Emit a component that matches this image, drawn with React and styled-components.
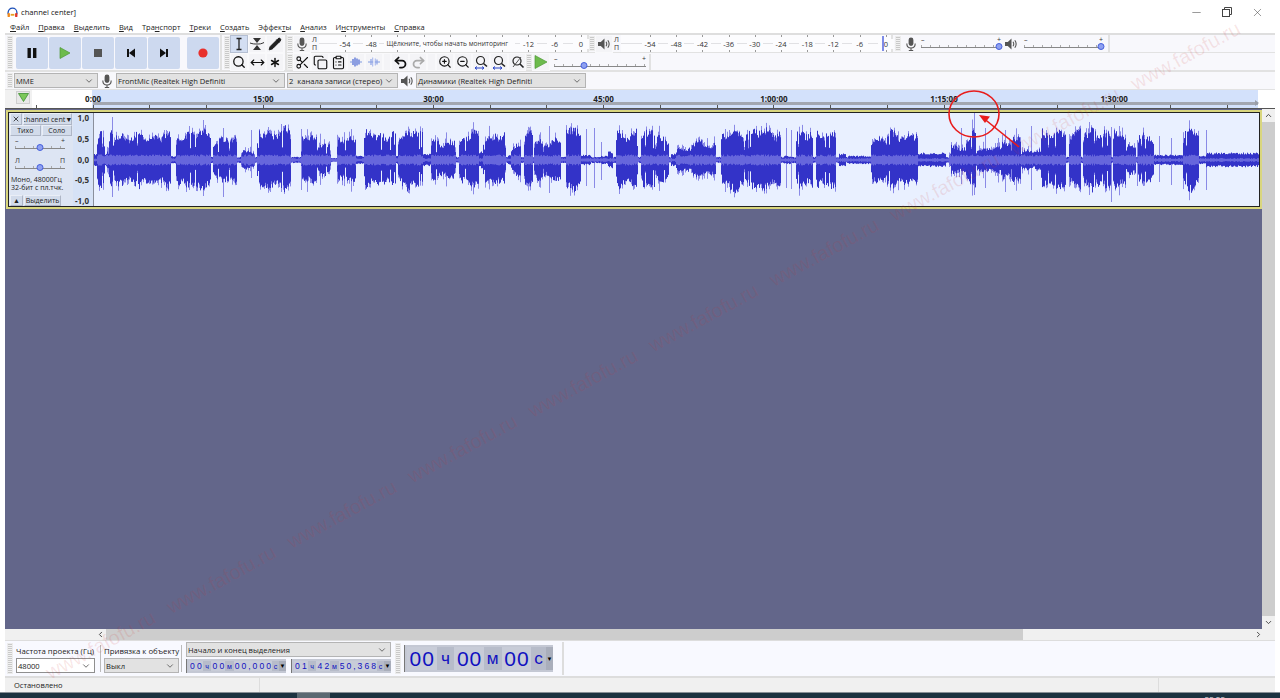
import React from "react";
import styled, { createGlobalStyle } from "styled-components";
import {
  Minus, X, ChevronDown, ChevronUp, ChevronLeft, ChevronRight, Pencil, Search, ZoomIn, ZoomOut,
  Scissors, Copy, ClipboardList, Undo2, Redo2, MoveHorizontal, Asterisk,
} from "lucide-react";

const GlobalStyle = createGlobalStyle`
  html, body { margin: 0; padding: 0; background: #fff; overflow: hidden; }
  * { box-sizing: border-box; }
  body { font-family: "Open Sans", "Liberation Sans", sans-serif; font-size: 8px; color: #222; }
`;

// envelope of the recording, read off the picture: [from x, to x, amplitude]
const SEGMENTS = [
  [93, 96, 6], [96, 104, 28], [104, 108, 10], [108, 113, 33], [113, 170, 27], [170, 175, 4], [175, 210, 30],
  [210, 212, 3], [212, 236, 23], [236, 240, 3], [240, 254, 9], [256, 290, 31], [290, 298, 3], [300, 316, 25],
  [316, 330, 16], [330, 336, 2], [336, 355, 22], [355, 363, 4], [363, 395, 28], [395, 397, 4], [397, 422, 30],
  [422, 430, 6], [430, 455, 20], [458, 478, 27], [478, 482, 8], [482, 505, 28], [507, 510, 5], [510, 520, 16],
  [523, 532, 31], [533, 560, 21], [560, 565, 3], [563, 580, 33], [580, 590, 5], [600, 607, 4], [607, 612, 8],
  [615, 637, 30], [640, 655, 31], [655, 668, 23], [670, 675, 6], [675, 690, 12], [690, 715, 18], [720, 780, 31],
  [783, 790, 4], [795, 812, 31], [815, 835, 31], [838, 845, 6], [847, 870, 4], [870, 885, 24], [885, 917, 28],
  [917, 945, 7], [948, 965, 15], [965, 975, 31], [975, 1000, 13], [1000, 1020, 23], [1020, 1040, 11],
  [1040, 1065, 31], [1068, 1080, 31], [1082, 1095, 34], [1095, 1110, 29], [1112, 1125, 31], [1125, 1135, 15],
  [1137, 1153, 27], [1153, 1162, 5], [1162, 1182, 5], [1182, 1198, 31], [1198, 1205, 4], [1205, 1258, 7],
];

// single tall columns: [x, up, down]
const SPIKES = [
  [111, 43, 37], [202, 40, 36], [222, 32, 37], [188, 34, 30], [250, 30, 18], [280, 36, 32], [300, 31, 30],
  [548, 34, 33], [585, 31, 26], [593, 32, 28], [600, 18, 20], [621, 30, 25], [785, 32, 28], [790, 30, 29],
  [973, 47, 35], [960, 32, 24], [984, 32, 28], [1004, 30, 32], [1030, 34, 30], [1110, 33, 42], [1158, 24, 22],
  [1170, 22, 25], [1205, 30, 30], [1136, 20, 26], [1088, 38, 35],
];

const buildWave = () => {
  let seed = 17;
  const rnd = () => {
    seed = (seed * 1103515245 + 12345) % 2147483648;
    return seed / 2147483648;
  };
  const top = 47;
  let dark = "";
  let fringe = "";
  let rms = "";
  for (let x = 93; x < 1258; x++) {
    const seg = SEGMENTS.find((s) => x >= s[0] && x < s[1]);
    const col = x - 93 + 0.5;
    let base = seg ? seg[2] : 3;
    if (seg && base > 8) {
      // syllables: slight swell inside a phrase, tapering only at the very ends
      const swell = 0.9 + 0.16 * Math.sin(x * 0.31 + seg[0]) * Math.sin(x * 0.083);
      const edge = Math.min(1, 0.7 + Math.min(x - seg[0], seg[1] - x) / 4);
      base = base * swell * edge;
    }
    const notch = seg && seg[2] > 12 && rnd() < 0.06 ? 0.5 : 1;
    const up = base * (0.78 + rnd() * 0.3) * notch;
    const down = base * (0.74 + rnd() * 0.3) * notch;
    dark += `M${col} ${(top - up).toFixed(1)}V${(top + down).toFixed(1)}`;
    if (seg && seg[2] > 8 && rnd() > 0.4) {
      const extra = rnd() * (rnd() < 0.12 ? 12 : 5);
      fringe += `M${col} ${(top - up - extra).toFixed(1)}V${(top + down + extra).toFixed(1)}`;
    }
    const band = seg && seg[2] > 8 ? 3.5 + rnd() * 2 : 1 + rnd();
    rms += `M${col} ${(top - band).toFixed(1)}V${(top + band).toFixed(1)}`;
  }
  SPIKES.forEach(([x, up, down]) => {
    fringe += `M${x - 93 + 0.5} ${top - up}V${top + down}`;
  });
  return { dark, fringe, rms };
};

const WAVE = buildWave();

const Window = styled.div`
  position: relative;
  width: 1280px;
  height: 698px;
  display: flex;
  flex-direction: column;
  overflow: hidden;
  background: #fff;
`;

const TitleBar = styled.div`
  height: 20px;
  display: flex;
  align-items: center;
  padding: 4px 7px 0;
  gap: 3px;
  font-size: 7.6px;
  color: #111;
`;

const WindowControls = styled.div`
  margin-left: auto;
  margin-right: 9px;
  display: flex;
  align-items: center;
  gap: 19px;
  color: #444;
  svg { display: block; }
`;

const MenuBar = styled.div`
  height: 13px;
  display: flex;
  align-items: center;
  gap: 9px;
  padding-left: 10px;
  font-size: 7.5px;
  color: #222;
  u { text-decoration-thickness: 0.5px; text-underline-offset: 1px; }
`;

const Body = styled.div`
  flex: 1;
  display: flex;
  flex-direction: column;
  padding: 0 5px;
  min-height: 0;
`;

const Dock = styled.div`
  background: #f8f8fc;
  border-top: 2px solid #dedede;
`;

const DockRow = styled.div`
  height: 37px;
  display: flex;
  border-bottom: 2px solid #e2e2e2;
`;

const DeviceRow = styled.div`
  height: 18px;
  display: flex;
  align-items: center;
  padding-left: 2px;
  border-bottom: 1px solid #e2e2e2;
`;

const Grip = styled.div`
  flex: none;
  width: 6px;
  align-self: stretch;
  margin: 1px ${(p) => p.$mr ?? 3}px 1px ${(p) => p.$ml || 0}px;
  background: repeating-linear-gradient(to bottom, #c9c9c9 0 1px, #f1f1f1 1px 2px);
  border: 1px solid #ececec;
`;

const TransportBar = styled.div`
  flex: none;
  width: 217px;
  display: flex;
  align-items: center;
  gap: 1px;
  padding-left: 2px;
  border-right: 2px solid #e2e2e2;
`;

const TransportButton = styled.div`
  width: 32px;
  height: 32px;
  display: flex;
  align-items: center;
  justify-content: center;
  background: #cdd9ef;
  border-radius: 2px;
  margin-left: ${(p) => (p.$gap ? "6px" : "0")};
`;

const ToolsBar = styled.div`
  flex: none;
  width: 65px;
  display: flex;
  align-items: stretch;
  padding-left: 2px;
  border-right: 2px solid #e2e2e2;
`;

const ToolGrid = styled.div`
  display: grid;
  grid-template-columns: repeat(3, 18px);
  grid-auto-rows: 18px;
`;

const IconButton = styled.div`
  flex: none;
  width: ${(p) => p.$w || 18}px;
  height: 18px;
  display: flex;
  align-items: center;
  justify-content: center;
  background: ${(p) => (p.$active ? "#d3def2" : "#f4f4f7")};
  border: 1px solid ${(p) => (p.$active ? "#b5bfd2" : "#f9f9fb")};
  color: #111;
`;

const RightColumn = styled.div`
  flex: 1;
  display: flex;
  flex-direction: column;
  min-width: 0;
`;

const SubRow = styled.div`
  height: 18px;
  display: flex;
  align-items: center;
  border-bottom: ${(p) => (p.$line ? "1px solid #e2e2e2" : "none")};
`;

const MeterLabels = styled.div`
  flex: none;
  width: 8px;
  font-size: 7px;
  line-height: 8px;
  color: #333;
  padding-left: 1px;
`;

const Meter = styled.div`
  flex: none;
  width: ${(p) => p.$w}px;
  height: 17px;
  display: flex;
  align-items: center;
  padding-left: ${(p) => p.$pad}px;
  font-size: 7.5px;
  color: #333;
  white-space: nowrap;
  background:
    repeating-linear-gradient(to right, #999 0 1px, transparent 1px 26.2px) ${(p) => p.$pad + 13}px 0 / 100% 2px no-repeat,
    repeating-linear-gradient(to right, #999 0 1px, transparent 1px 26.2px) ${(p) => p.$pad + 13}px 100% / 100% 2px no-repeat,
    linear-gradient(#e1e1e4, #e1e1e4) 0 50% / 100% 1px no-repeat,
    #fcfcfe;
  border-right: 2px solid #e2e2e2;
`;

const MeterMark = styled.span`
  flex: none;
  width: 26.2px;
  text-align: center;
  background: #fcfcfe;
  background-clip: content-box;
  padding: 0 5px;
`;

const MeterHint = styled.span`
  flex: none;
  width: 131px;
  text-align: left;
  padding-left: 2px;
  font-size: 6.6px;
  background: #fcfcfe;
`;

const PeakMark = styled.span`
  flex: none;
  width: 2px;
  height: 15px;
  background: #7e8ce8;
  margin-left: -17px;
`;

const MixerBar = styled.div`
  display: flex;
  align-items: center;
  gap: 3px;
  width: ${(p) => p.$w || 217}px;
  height: 17px;
  padding-left: ${(p) => p.$pad || 2}px;
  border-right: 2px solid #e2e2e2;
`;

const SliderBox = styled.div`
  position: relative;
  flex: none;
  width: ${(p) => p.$w}px;
  height: 15px;
  margin-left: ${(p) => p.$ml || 0}px;
  font-size: 7px;
  color: #333;
  display: flex;
  justify-content: space-between;
  line-height: 7px;
`;

const SliderTrack = styled.div`
  position: absolute;
  left: 0;
  right: 0;
  bottom: 3px;
  height: 3px;
  border-bottom: 1px solid #888;
  background: repeating-linear-gradient(to right, #aaa 0 1px, transparent 1px 9px);
`;

const SliderThumb = styled.div`
  position: absolute;
  bottom: 1px;
  width: 7px;
  height: 7px;
  border-radius: 50%;
  background: #8ea0f0;
  border: 1.5px solid #4660dc;
  transform: translateX(-50%);
`;

const SelectBox = styled.div`
  flex: none;
  width: ${(p) => p.$w}px;
  height: ${(p) => p.$h || 15}px;
  margin-right: ${(p) => p.$mr || 0}px;
  display: flex;
  align-items: center;
  justify-content: space-between;
  padding: 0 3px 0 1px;
  background: ${(p) => (p.$white ? "#fff" : "#e2e2e2")};
  border: 1px solid ${(p) => (p.$white ? "#8f8f8f" : "#b4b4b4")};
  font-size: 7.6px;
  color: #222;
  white-space: nowrap;
  svg { color: #555; flex: none; }
`;

const DeviceIcon = styled.div`
  flex: none;
  width: ${(p) => p.$w}px;
  display: flex;
  justify-content: center;
  color: #444;
`;

const Ruler = styled.div`
  height: 19px;
  display: flex;
  flex-direction: column;
  background: linear-gradient(to right, #f1f1f1 27px, #fff 27px 87px, #d3e1fb 87px 1253px, #fff 1253px);
  border-bottom: 1px solid #555;
`;

const RulerLabels = styled.div`
  position: relative;
  height: 13px;
  margin-bottom: -1px;
  padding-left: 3px;
  display: flex;
  align-items: flex-end;
  font-size: 8px;
  line-height: 9px;
  font-weight: 700;
  color: #222;
`;

const RulerMark = styled.span`
  flex: none;
  width: 170.2px;
  text-align: center;
`;

const PlayheadButton = styled.div`
  position: absolute;
  left: 11px;
  top: 1px;
  width: 14px;
  height: 13px;
  background: #e8e8e8;
  border: 1px solid #cfcfcf;
  display: flex;
  align-items: center;
  justify-content: center;
`;

const ScrubBar = styled.div`
  position: relative;
  height: 3px;
  margin-left: 88px;
  width: 1165px;
  background: #a3a7b1;
  &::after {
    content: "";
    position: absolute;
    right: -1px;
    top: -2px;
    border-left: 4px solid #9a9ea8;
    border-top: 3.5px solid transparent;
    border-bottom: 3.5px solid transparent;
  }
`;

const RulerTicks = styled.div`
  height: 3px;
  background: repeating-linear-gradient(to right, #555 0 1px, transparent 1px 56.72px) 31px 0 no-repeat;
`;

const Workspace = styled.div`
  flex: 1;
  display: flex;
  min-height: 0;
`;

const Canvas = styled.div`
  flex: 1;
  background: #63668a;
  padding: 1px 0 0 1px;
`;

const Track = styled.div`
  height: 99px;
  display: flex;
  border: 2px solid #d9d67e;
  padding: 1px;
  background: #222;
`;

const TrackPanel = styled.div`
  flex: none;
  width: 64px;
  display: flex;
  flex-direction: column;
  background: #dde5f3;
  font-size: 7px;
  color: #222;
`;

const PanelRow = styled.div`
  height: 12px;
  display: flex;
  gap: 1px;
  padding: 0 1px;
`;

const PanelButton = styled.div`
  flex: ${(p) => (p.$w ? "none" : 1)};
  width: ${(p) => p.$w || 0}px;
  display: flex;
  align-items: center;
  justify-content: center;
  background: #d2dbea;
  border: 1px solid #eaeef6;
  border-right-color: #aeb6c6;
  border-bottom-color: #aeb6c6;
  white-space: nowrap;
  overflow: hidden;
  font-size: ${(p) => p.$fs || 7}px;
`;

const PanelInfo = styled.div`
  margin-top: auto;
  padding: 0 2px 3px;
  line-height: 8px;
  font-size: 7px;
`;

const PanelSlider = styled.div`
  padding: 1px 4px 0 6px;
  margin-bottom: 4px;
`;

const AmpRuler = styled.div`
  flex: none;
  width: 21px;
  display: flex;
  flex-direction: column;
  justify-content: space-between;
  align-items: flex-end;
  padding: 0 4px 1px 0;
  background: #d6e2f6;
  border-right: 1px solid #8a8f9c;
  font-size: 8px;
  line-height: 9px;
  font-weight: 700;
  color: #333;
`;

const WaveArea = styled.div`
  flex: 1;
  background: #e9f0ff;
  overflow: hidden;
`;

const VScroll = styled.div`
  flex: none;
  width: 13px;
  display: flex;
  flex-direction: column;
  align-items: center;
  background: #f0f0f0;
  color: #444;
  svg { flex: none; margin: 2px 0; }
`;

const VThumb = styled.div`
  flex: 1;
  width: 100%;
  background: #cdcdcd;
`;

const HScroll = styled.div`
  height: 11px;
  display: flex;
  align-items: center;
  background: #f0f0f0;
  color: #444;
  padding-left: 91px;
  padding-right: 12px;
`;

const HThumb = styled.div`
  width: 917px;
  height: 100%;
  margin: 0 auto 0 1px;
  background: #cdcdcd;
`;

const SelectionBar = styled.div`
  height: 38px;
  display: flex;
  padding: 1px 0 1px 2px;
  background: #f8f9ff;
  border-top: 1px solid #ddd;
  border-bottom: 2px solid #ddd;
`;

const BarColumn = styled.div`
  flex: none;
  width: ${(p) => p.$w}px;
  display: flex;
  flex-direction: column;
  justify-content: space-between;
  padding-bottom: 2px;
  font-size: 7.8px;
  color: #222;
  white-space: nowrap;
`;

const BarLabel = styled.div`
  height: 15px;
  line-height: 18px;
`;

const Divider = styled.div`
  flex: none;
  width: 1px;
  margin: 3px ${(p) => p.$r}px 3px ${(p) => p.$l}px;
  background: #bbb;
`;

const TimeRow = styled.div`
  display: flex;
  justify-content: space-between;
`;

const TimeBox = styled.div`
  flex: none;
  display: flex;
  align-items: stretch;
  width: ${(p) => (p.$big ? 149 : 100)}px;
  height: ${(p) => (p.$big ? 27 : 14)}px;
  padding: 2px 0 2px 2px;
  background: #c4c8d4;
  border-left: 1px solid #777;
  font-family: "Liberation Sans", sans-serif;
  font-size: ${(p) => (p.$big ? 21 : 8.6)}px;
  color: #1111c0;
`;

const TimeCell = styled.span`
  flex: ${(p) => p.$grow || 1};
  display: flex;
  align-items: center;
  justify-content: ${(p) => (p.$big ? "center" : "space-around")};
  gap: ${(p) => (p.$big ? 1 : 0)}px;
  background: ${(p) => (p.$unit ? "#b7bccA" : "#c8ccd8")};
  font-size: ${(p) => (p.$unit ? "0.82em" : "1em")};
`;

const TimeArrow = styled.span`
  flex: none;
  width: 7px;
  display: flex;
  align-items: center;
  justify-content: center;
  font-size: 6px;
  color: #000;
  background: #a9aebb;
`;

const BigTime = styled.div`
  display: flex;
  align-items: center;
  padding-left: 0;
  width: 160px;
  border-right: 2px solid #ddd;
`;

const StatusBar = styled.div`
  height: 14px;
  display: flex;
  align-items: center;
  background: #f0f0f0;
  font-size: 7.5px;
  color: #222;
`;

const StatusCell = styled.div`
  width: ${(p) => p.$w}px;
  height: 100%;
  padding-left: ${(p) => p.$pad || 0}px;
  line-height: 15px;
  border-right: 1px solid #ddd;
`;

const Taskbar = styled.div`
  height: 6px;
  display: flex;
  background: #1c3240;
  overflow: hidden;
  border-top: 1px solid #888f96;
`;

const TaskItem = styled.div`
  width: 33px;
  margin-left: 297px;
  background: #5a6871;
`;

const Clock = styled.div`
  margin-left: auto;
  margin-right: 55px;
  padding-top: 1px;
  font-size: 8px;
  line-height: 9px;
  color: #d8dde0;
`;

const Watermark = styled.div`
  position: absolute;
  left: 42px;
  top: 664px;
  display: flex;
  gap: 16px;
  font-family: "Liberation Sans", sans-serif;
  font-size: 20px;
  white-space: nowrap;
  color: rgba(205, 50, 50, 0.12);
  transform: rotate(-28.5deg);
  transform-origin: 0 0;
  pointer-events: none;
`;

const Annotation = styled.svg`
  position: absolute;
  left: 940px;
  top: 85px;
  pointer-events: none;
`;

const Mic = ({ size = 14 }) => (
  <svg width={size} height={size} viewBox="0 0 14 14" fill="none">
    <rect x="4.6" y="0.5" width="4.8" height="8.5" rx="2.4" fill="#555" />
    <path d="M2.8 6.5c0 3 1.8 4.5 4.2 4.5s4.2-1.5 4.2-4.5M7 11v2.5M4.8 13.5h4.4" stroke="#555" strokeWidth="1.1" />
  </svg>
);

const Speaker = ({ size = 14 }) => (
  <svg width={size} height={size} viewBox="0 0 14 14" fill="none">
    <path d="M1 5h2.8L7.5 1.6v10.8L3.8 9H1z" fill="#555" />
    <path d="M9 4.8c.9 1.3.9 3.1 0 4.4M10.8 3.3c1.6 2.2 1.6 5.2 0 7.4" stroke="#555" strokeWidth="1.1" />
  </svg>
);

const Logo = () => (
  <svg width="11" height="11" viewBox="0 0 12 12" fill="none">
    <path d="M1.2 8V6a4.8 4.8 0 0 1 9.6 0v2" stroke="#1b4fb8" strokeWidth="1.4" />
    <rect x="0.6" y="6.5" width="2.6" height="4.5" rx="1" fill="#f08a1c" />
    <rect x="8.8" y="6.5" width="2.6" height="4.5" rx="1" fill="#e0352b" />
    <path d="M4 8.5h4" stroke="#e8a020" strokeWidth="2" />
  </svg>
);

const RestoreIcon = () => (
  <svg width="10" height="10" viewBox="0 0 10 10" fill="none" stroke="#444">
    <rect x="0.5" y="2.5" width="7" height="7" />
    <path d="M2.5 2.5v-2h7v7h-2" />
  </svg>
);

const Shape = ({ w = 12, h = 12, children }) => (
  <svg width={w} height={h} viewBox={`0 0 ${w} ${h}`}>{children}</svg>
);

const Pause = () => <Shape><rect x="1.5" y="1" width="3.4" height="10" fill="#111" /><rect x="7" y="1" width="3.4" height="10" fill="#111" /></Shape>;
const Play = ({ size = 12 }) => <Shape w={size} h={size}><path d={`M1 0.5L${size - 1} ${size / 2}L1 ${size - 0.5}Z`} fill="#6dbb4c" stroke="#4f9a36" strokeWidth="0.7" /></Shape>;
const Stop = () => <Shape><rect x="2" y="2" width="8" height="8" fill="#555" /></Shape>;
const Prev = () => <Shape><rect x="2" y="2" width="2" height="8" fill="#111" /><path d="M10 1.5V10.5L4 6Z" fill="#111" /></Shape>;
const Next = () => <Shape><rect x="8" y="2" width="2" height="8" fill="#111" /><path d="M2 1.5V10.5L8 6Z" fill="#111" /></Shape>;
const Record = () => <Shape><circle cx="6" cy="6" r="4.6" fill="#e8302c" /></Shape>;

const IBeam = () => (
  <Shape w={14} h={14}><path d="M4.5 1.5h5M7 1.5v11M4.5 12.5h5" stroke="#222" strokeWidth="1.3" fill="none" /></Shape>
);

const EnvelopeTool = () => (
  <Shape w={16} h={14}>
    <path d="M4 1h8L8 6Z M4 13h8L8 8Z" fill="#333" />
    <path d="M1 6c3 1 4 1 7 1s4 0 7-1.5" stroke="#333" fill="none" />
  </Shape>
);

const Bars = ({ split }) => (
  <Shape w={14} h={12}>
    <path d={split ? "M1 6h12" : "M1 6h2M11 6h2"} stroke="#7f9ae0" strokeWidth="1" />
    <path d="M4 3v6M6 1.5v9M8 2.5v7M10 3.5v5" stroke={split ? "#8aa0e6" : "#4664d2"} strokeWidth="1.2" />
    {split && <path d="M7 0v12" stroke="#f8f8fc" strokeWidth="1.4" />}
  </Shape>
);

const FitZoom = ({ arrows }) => (
  <Shape w={15} h={15}>
    <circle cx="6.5" cy="5.5" r="4" fill="none" stroke="#222" strokeWidth="1.2" />
    <path d="M9.5 8.5l3.5 3" stroke="#222" strokeWidth="1.6" />
    {arrows && <path d="M1 13h9M1 13l2-1.5M1 13l2 1.5M10 13l-2-1.5M10 13l-2 1.5" stroke="#2b46c8" fill="none" />}
  </Shape>
);

const ZoomToggle = () => (
  <Shape w={15} h={15}>
    <circle cx="7" cy="6" r="4" fill="none" stroke="#222" strokeWidth="1.2" />
    <path d="M10 9l3.5 3.5" stroke="#222" strokeWidth="1.6" />
    <path d="M3 12l8-10" stroke="#555" />
  </Shape>
);

const Slider = ({ w, value, ml, left = "–", right = "+" }) => (
  <SliderBox $w={w} $ml={ml}>
    <span>{left}</span>
    <span>{right}</span>
    <SliderTrack />
    <SliderThumb style={{ left: `${value}%` }} />
  </SliderBox>
);

const Time = ({ big, groups }) => (
  <TimeBox $big={big}>
    {groups.map((g, i) => (
      <TimeCell key={i} $big={big} $unit={g.unit} $grow={g.grow}>
        {g.text.split("").map((c, j) => <span key={j}>{c}</span>)}
      </TimeCell>
    ))}
    <TimeArrow>▼</TimeArrow>
  </TimeBox>
);

const timeGroups = (h, m, s, ms) => {
  const out = [
    { text: h, grow: 2 }, { text: "ч", unit: true, grow: 1.2 },
    { text: m, grow: 2 }, { text: "м", unit: true, grow: 1.2 },
  ];
  if (ms) {
    out.push({ text: `${s},${ms}`, grow: 5.5 });
  } else {
    out.push({ text: s, grow: 2 });
  }
  out.push({ text: "с", unit: true, grow: 1 });
  return out;
};

const MENU = [
  ["", "Ф", "айл"], ["", "П", "равка"], ["", "В", "ыделить"], ["", "В", "ид"], ["Тра", "н", "спорт"], ["", "Т", "реки"],
  ["", "С", "оздать"], ["Эффек", "т", "ы"], ["", "А", "нализ"], ["И", "н", "струменты"], ["", "С", "правка"],
];

const RULER_MARKS = ["0:00", "15:00", "30:00", "45:00", "1:00:00", "1:15:00", "1:30:00"];
const PLAY_MARKS = ["-54", "-48", "-42", "-36", "-30", "-24", "-18", "-12", "-6", "0"];

const App = () => {
  return (
    <Window>
      <GlobalStyle />
      <TitleBar>
        <Logo />
        <span>channel center]</span>
        <WindowControls>
          <Minus size={13} strokeWidth={1} />
          <RestoreIcon />
          <X size={13} strokeWidth={1} />
        </WindowControls>
      </TitleBar>
      <MenuBar>
        {MENU.map(([a, b, c], i) => (
          <span key={i}>{a}<u>{b}</u>{c}</span>
        ))}
      </MenuBar>
      <Body>
        <Dock>
          <DockRow>
            <TransportBar>
              <Grip $mr={2} />
              <TransportButton><Pause /></TransportButton>
              <TransportButton><Play /></TransportButton>
              <TransportButton><Stop /></TransportButton>
              <TransportButton><Prev /></TransportButton>
              <TransportButton><Next /></TransportButton>
              <TransportButton $gap><Record /></TransportButton>
            </TransportBar>
            <ToolsBar>
              <Grip $mr={0} />
              <ToolGrid>
                <IconButton $active><IBeam /></IconButton>
                <IconButton><EnvelopeTool /></IconButton>
                <IconButton><Pencil size={14} fill="#222" strokeWidth={1.4} /></IconButton>
                <IconButton><Search size={14} strokeWidth={2.2} /></IconButton>
                <IconButton><MoveHorizontal size={15} strokeWidth={1.8} /></IconButton>
                <IconButton><Asterisk size={17} strokeWidth={2.2} /></IconButton>
              </ToolGrid>
            </ToolsBar>
            <RightColumn>
              <SubRow $line>
                <Grip $mr={0} />
                <IconButton><Mic /></IconButton>
                <MeterLabels>Л<br />П</MeterLabels>
                <Meter $w={270} $pad={13}>
                  <MeterMark>-54</MeterMark>
                  <MeterMark>-48</MeterMark>
                  <MeterHint>Щёлкните, чтобы начать мониторинг</MeterHint>
                  <MeterMark>-12</MeterMark>
                  <MeterMark>-6</MeterMark>
                  <MeterMark>0</MeterMark>
                </Meter>
                <Grip $mr={0} />
                <IconButton><Speaker /></IconButton>
                <MeterLabels>Л<br />П</MeterLabels>
                <Meter $w={272} $pad={16}>
                  {PLAY_MARKS.map((m) => <MeterMark key={m}>{m}</MeterMark>)}
                  <PeakMark />
                </Meter>
                <MixerBar>
                  <Grip $mr={0} />
                  <Mic />
                  <Slider w={80} value={98} />
                  <Speaker />
                  <Slider w={79} value={98} ml={3} />
                </MixerBar>
              </SubRow>
              <SubRow>
                <Grip $mr={0} />
                <IconButton><Scissors size={15} strokeWidth={1.8} /></IconButton>
                <IconButton><Copy size={15} strokeWidth={1.8} /></IconButton>
                <IconButton><ClipboardList size={15} strokeWidth={1.8} /></IconButton>
                <IconButton><Bars /></IconButton>
                <IconButton><Bars split /></IconButton>
                <IconButton $w={8} />
                <IconButton><Undo2 size={15} strokeWidth={2.8} /></IconButton>
                <IconButton><Redo2 size={15} strokeWidth={2.8} color="#aaa" /></IconButton>
                <IconButton $w={9} />
                <IconButton><ZoomIn size={14} strokeWidth={1.9} /></IconButton>
                <IconButton><ZoomOut size={14} strokeWidth={1.9} /></IconButton>
                <IconButton><FitZoom arrows /></IconButton>
                <IconButton><FitZoom arrows /></IconButton>
                <IconButton><ZoomToggle /></IconButton>
                <Grip $mr={0} />
                <IconButton><Play size={14} /></IconButton>
                <MixerBar $w={101} $pad={4}>
                  <Slider w={92} value={33} />
                </MixerBar>
              </SubRow>
            </RightColumn>
          </DockRow>
          <DeviceRow>
            <Grip $mr={1} />
            <SelectBox $w={84}>MME<ChevronDown size={10} /></SelectBox>
            <DeviceIcon $w={18}><Mic /></DeviceIcon>
            <SelectBox $w={169} $mr={2}>FrontMic (Realtek High Definiti<ChevronDown size={10} /></SelectBox>
            <SelectBox $w={111}>2&nbsp; канала записи (стерео)<ChevronDown size={10} /></SelectBox>
            <DeviceIcon $w={18}><Speaker /></DeviceIcon>
            <SelectBox $w={170}>Динамики (Realtek High Definiti<ChevronDown size={10} /></SelectBox>
          </DeviceRow>
        </Dock>
        <Ruler>
          <RulerLabels>
            <PlayheadButton>
              <Shape w={11} h={9}><path d="M0.5 0.5h10L5.5 8.5Z" fill="#7cc85a" stroke="#3f8f34" strokeWidth="0.8" /></Shape>
            </PlayheadButton>
            {RULER_MARKS.map((m) => <RulerMark key={m}>{m}</RulerMark>)}
          </RulerLabels>
          <ScrubBar />
          <RulerTicks />
        </Ruler>
        <Workspace>
          <Canvas>
            <Track>
              <TrackPanel>
                <PanelRow>
                  <PanelButton $w={12}><X size={8} strokeWidth={2.4} /></PanelButton>
                  <PanelButton $fs={7.2}>channel cent▼</PanelButton>
                </PanelRow>
                <PanelRow>
                  <PanelButton>Тихо</PanelButton>
                  <PanelButton>Соло</PanelButton>
                </PanelRow>
                <PanelSlider><Slider w={50} value={50} /></PanelSlider>
                <PanelSlider><Slider w={50} value={50} left="Л" right="П" /></PanelSlider>
                <PanelInfo>Моно, 48000Гц<br />32-бит с пл.тчк.</PanelInfo>
                <PanelRow>
                  <PanelButton $w={13}>▲</PanelButton>
                  <PanelButton $w={37}>Выделить</PanelButton>
                </PanelRow>
              </TrackPanel>
              <AmpRuler>
                <span>1,0</span>
                <span>0,5</span>
                <span>0,0</span>
                <span>-0,5</span>
                <span>-1,0</span>
              </AmpRuler>
              <WaveArea>
                <svg width="1165" height="95" viewBox="0 0 1165 95" fill="none">
                  <path d={WAVE.fringe} stroke="#8a8ae6" />
                  <path d={WAVE.dark} stroke="#3333c8" />
                  <path d={WAVE.rms} stroke="#6666dc" />
                </svg>
              </WaveArea>
            </Track>
          </Canvas>
          <VScroll>
            <ChevronUp size={9} strokeWidth={2.5} />
            <VThumb />
            <ChevronDown size={9} strokeWidth={2.5} />
          </VScroll>
        </Workspace>
        <HScroll>
          <ChevronLeft size={9} strokeWidth={2.5} />
          <HThumb />
          <ChevronRight size={9} strokeWidth={2.5} />
        </HScroll>
        <SelectionBar>
          <Grip />
          <BarColumn $w={79}>
            <BarLabel>Частота проекта (Гц)</BarLabel>
            <SelectBox $w={79} $white>48000<ChevronDown size={10} /></SelectBox>
          </BarColumn>
          <Divider $l={5} $r={3} />
          <BarColumn $w={75}>
            <BarLabel>Привязка к объекту</BarLabel>
            <SelectBox $w={75}>Выкл<ChevronDown size={10} /></SelectBox>
          </BarColumn>
          <Divider $l={2} $r={4} />
          <BarColumn $w={205}>
            <SelectBox $w={205} $h={15}>Начало и конец выделения<ChevronDown size={10} /></SelectBox>
            <TimeRow>
              <Time groups={timeGroups("00", "00", "00", "000")} />
              <Time groups={timeGroups("01", "42", "50", "368")} />
            </TimeRow>
          </BarColumn>
          <Grip $ml={4} />
          <BigTime>
            <Time big groups={timeGroups("00", "00", "00")} />
          </BigTime>
        </SelectionBar>
        <StatusBar>
          <StatusCell $w={255} $pad={9}>Остановлено</StatusCell>
          <StatusCell $w={899} />
        </StatusBar>
      </Body>
      <Taskbar>
        <TaskItem />
        <Clock>22:22</Clock>
      </Taskbar>
      <Watermark>
        {Array.from({ length: 10 }).map((_, i) => <span key={i}>www.fafofu.ru</span>)}
      </Watermark>
      <Annotation width="90" height="70" viewBox="0 0 90 70" fill="none">
        <ellipse cx="34" cy="29" rx="25" ry="23" stroke="#e81c1c" strokeWidth="1.6" />
        <path d="M79 62L42 32" stroke="#e81c1c" strokeWidth="1.6" />
        <path d="M39 30l11 1.5-5 6.5z" fill="#e81c1c" />
      </Annotation>
    </Window>
  );
};

export default App;
